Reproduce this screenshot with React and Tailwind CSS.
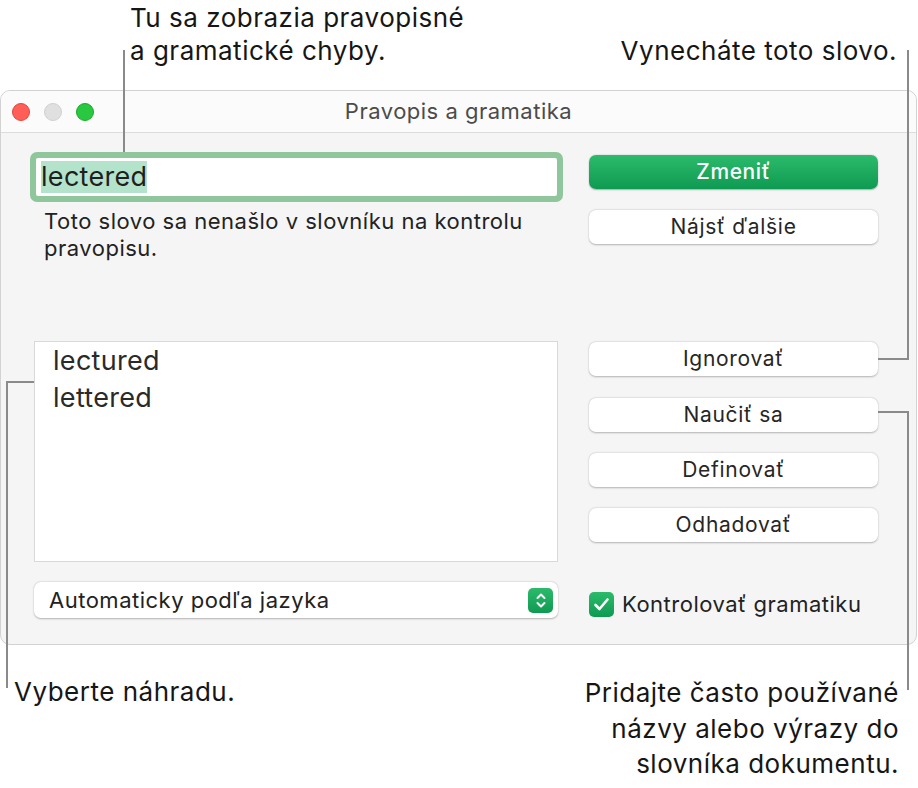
import React from 'react';

// ─── Small pieces ─────────────────────────────────────────────────────────────
function Light({ color, border }) {
    return <span className={`w-[18px] h-[18px] rounded-full border ${color} ${border}`} />;
}

function MacButton({ children, primary }) {
    if (primary) {
        return (
            <div className="h-[34px] rounded-[7px] bg-gradient-to-b from-[#2bbb6b] to-[#0c9a52] shadow-[0_0.5px_1.5px_rgba(0,0,0,0.3)] flex items-center justify-center text-white text-[21px] tracking-[0.6px] font-medium">
                {children}
            </div>
        );
    }
    return (
        <div className="h-[34px] rounded-[7px] bg-white shadow-[0_0.5px_2px_rgba(0,0,0,0.28)] flex items-center justify-center text-[#262626] text-[21px] tracking-[0.7px]">
            {children}
        </div>
    );
}

function Line({ className }) {
    return <div className={`absolute bg-[#8a8a8a] ${className}`} />;
}

// ─── Main ─────────────────────────────────────────────────────────────────────
export default function App() {
    return (
        <div className="relative w-[918px] h-[788px] bg-white overflow-hidden text-[#161616] font-['Inter','Noto_Sans',sans-serif]">

            {/* top callouts */}
            <div className="h-[90px] flex justify-between">
                <div className="pl-[130px] pt-[1px] text-[26px] tracking-[0.5px] leading-[33px]">
                    Tu sa zobrazia pravopisné<br />a gramatické chyby.
                </div>
                <div className="pr-[21px] pt-[34px] text-[26px] tracking-[0.5px] leading-[33px]">Vynecháte toto slovo.</div>
            </div>

            {/* window */}
            <div className="w-[917px] h-[555px] rounded-[10px] border border-[#d2d2d2] bg-[#f5f5f5] overflow-hidden flex flex-col">
                <div className="h-[42px] shrink-0 flex items-center bg-[#fbfbfb] border-b border-[#dcdcdc]">
                    <div className="w-[95px] pl-[11px] flex items-center gap-[14px]">
                        <Light color="bg-[#ff5f57]" border="border-[#e2463f]" />
                        <Light color="bg-[#e0e0e0]" border="border-[#d0d0d0]" />
                        <Light color="bg-[#28c840]" border="border-[#1aab29]" />
                    </div>
                    <div className="flex-1 pr-[95px] text-center text-[22px] tracking-[0.5px] text-[#4b4b4b]">Pravopis a gramatika</div>
                </div>

                <div className="flex pl-[29px] pt-[19px]">
                    {/* left column */}
                    <div className="w-[533px] flex flex-col">
                        <div className="h-[50px] rounded-[7px] bg-[#8fc69b] p-[6px]">
                            <div className="h-full bg-white rounded-[2px] flex items-center pl-[5px]">
                                <span className="bg-[#b4e3cc] text-[27px] tracking-[0.3px] leading-[32px] text-[#1f1f1f]">lectered</span>
                            </div>
                        </div>
                        <div className="mt-[6px] pl-[14px] text-[22px] tracking-[0.5px] leading-[27px] text-[#222]">
                            Toto slovo sa nenašlo v slovníku na kontrolu<br />pravopisu.
                        </div>
                        <div className="mt-[79px] ml-[4px] w-[524px] h-[221px] bg-white border border-[#d9d9d9] pl-[18px] text-[27px] tracking-[0.3px] leading-[37px] text-[#2a2a2a]">
                            <div>lectured</div>
                            <div>lettered</div>
                        </div>
                        <div className="mt-[20px] ml-[4px] w-[524px] h-[36px] rounded-[7px] bg-white shadow-[0_0.5px_2px_rgba(0,0,0,0.28)] flex items-center pl-[15px] pr-[5px]">
                            <span className="flex-1 text-[22px] tracking-[0.5px] text-[#222]">Automaticky podľa jazyka</span>
                            <span className="w-[25px] h-[25px] rounded-[5px] bg-gradient-to-b from-[#2bbb6b] to-[#0c9a52] flex items-center justify-center">
                                <svg width="12" height="17" viewBox="0 0 12 17" fill="none" stroke="white" strokeWidth="2" strokeLinecap="round" strokeLinejoin="round">
                                    <path d="M2.5 6 L6 2.5 L9.5 6" />
                                    <path d="M2.5 11 L6 14.5 L9.5 11" />
                                </svg>
                            </span>
                        </div>
                    </div>

                    {/* right column */}
                    <div className="ml-[26px] w-[289px] pt-[3px] flex flex-col">
                        <MacButton primary>Zmeniť</MacButton>
                        <div className="mt-[21px]"><MacButton>Nájsť ďalšie</MacButton></div>
                        <div className="mt-[98px]"><MacButton>Ignorovať</MacButton></div>
                        <div className="mt-[22px]"><MacButton>Naučiť sa</MacButton></div>
                        <div className="mt-[21px]"><MacButton>Definovať</MacButton></div>
                        <div className="mt-[21px]"><MacButton>Odhadovať</MacButton></div>
                        <div className="mt-[46px] flex items-center gap-[8px]">
                            <span className="w-[25px] h-[25px] rounded-[5px] bg-gradient-to-b from-[#2bbb6b] to-[#0c9a52] flex items-center justify-center">
                                <svg width="17" height="15" viewBox="0 0 17 15" fill="none" stroke="white" strokeWidth="2.6" strokeLinecap="round" strokeLinejoin="round">
                                    <path d="M2.5 8 L6.5 12 L14.5 2.5" />
                                </svg>
                            </span>
                            <span className="text-[22px] tracking-[0.5px] text-[#222]">Kontrolovať gramatiku</span>
                        </div>
                    </div>
                </div>
            </div>

            {/* bottom callouts */}
            <div className="flex justify-between">
                <div className="pl-[14px] pt-[29px] text-[26px] tracking-[0.5px] leading-[36px]">Vyberte náhradu.</div>
                <div className="pr-[19px] pt-[30px] text-[26px] tracking-[0.5px] leading-[35.5px] text-right">
                    Pridajte často používané<br />názvy alebo výrazy do<br />slovníka dokumentu.
                </div>
            </div>

            {/* callout lines */}
            <Line className="left-[123px] top-[50px] w-[2px] h-[102px]" />
            <Line className="left-[907px] top-[50px] w-[2px] h-[310px]" />
            <Line className="left-[878px] top-[358px] w-[31px] h-[2px]" />
            <Line className="left-[878px] top-[411px] w-[31px] h-[2px]" />
            <Line className="left-[907px] top-[411px] w-[2px] h-[279px]" />
            <Line className="left-[6px] top-[381px] w-[28px] h-[2px]" />
            <Line className="left-[6px] top-[381px] w-[2px] h-[307px]" />
        </div>
    );
}
